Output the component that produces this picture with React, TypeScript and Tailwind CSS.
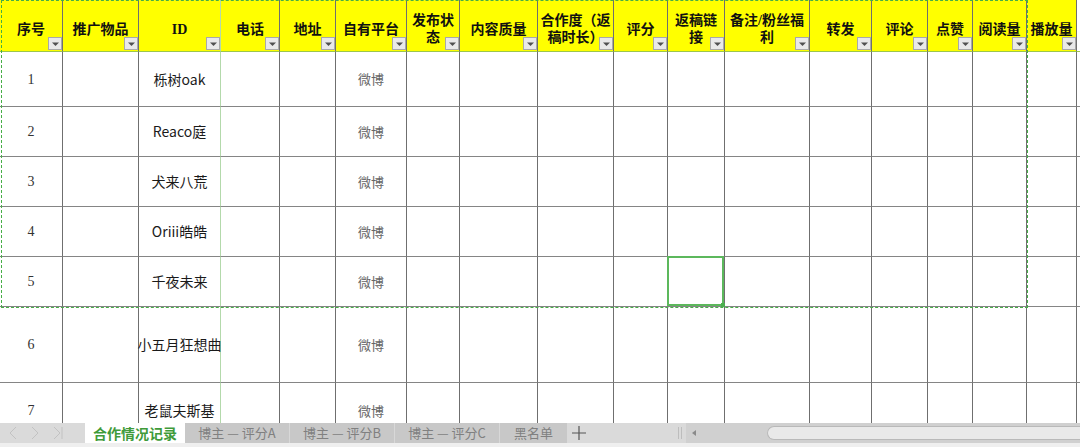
// 合作情况记录：表格视图，模拟电子表格的表头筛选、选区与底部工作表标签
const headers: string[][] = [
  ['序号'],
  ['推广物品'],
  ['ID'],
  ['电话'],
  ['地址'],
  ['自有平台'],
  ['发布状', '态'],
  ['内容质量'],
  ['合作度（返', '稿时长）'],
  ['评分'],
  ['返稿链', '接'],
  ['备注/粉丝福', '利'],
  ['转发'],
  ['评论'],
  ['点赞'],
  ['阅读量'],
  ['播放量'],
];

const rows = [
  { n: 1, id: '栎树oak' },
  { n: 2, id: 'Reaco庭' },
  { n: 3, id: '犬来八荒' },
  { n: 4, id: 'Oriii皓皓' },
  { n: 5, id: '千夜未来' },
  { n: 6, id: '小五月狂想曲' },
  { n: 7, id: '老鼠夫斯基' },
];

const tabs = ['博主 — 评分A', '博主 — 评分B', '博主 — 评分C'];

function FilterButton() {
  return (
    <div className="absolute right-0 bottom-[1px] w-[14px] h-[13px] bg-[#e9e9e9] border border-[#a9a9a9] flex items-center justify-center">
      <svg width="9" height="6" viewBox="0 0 9 6">
        <path d="M1 1.5 H8 L4.5 5 Z" fill="#505050" />
      </svg>
    </div>
  );
}

function cellBorder(col: number) {
  // 第三列右侧为浅绿色冻结线
  return col === 2 ? 'border-r border-r-[#b3d9ab]' : 'border-r border-r-[#6f6f6f]';
}

export default function App() {
  return (
    <div className="w-[1080px] h-[447px] flex flex-col overflow-hidden bg-white" style={{ fontFamily: '"Noto Sans CJK SC", "Noto Sans", sans-serif' }}>
      {/* Sheet */}
      <div className="relative h-[423px] overflow-hidden">
        <div className="grid grid-cols-[63px_76px_82px_59px_56px_71px_53px_78px_76px_54px_57px_85px_62px_56px_45px_54px_50px_3px] grid-rows-[52px_55px_50px_50px_50px_50px_76px_56px]">
          {/* Header */}
          {headers.map((h, i) => (
            <div
              key={i}
              className={`relative bg-[#ffff00] border-b border-b-[#9cc64c] ${cellBorder(i)} flex flex-col items-center justify-center pt-[7px] text-[14px] leading-[17px] font-bold text-[#111]`}
              style={{ fontFamily: '"Liberation Serif", "Noto Sans CJK SC", serif' }}
            >
              {h.map((line, j) => (
                <span key={j} className="whitespace-nowrap">{line}</span>
              ))}
              <FilterButton />
            </div>
          ))}
          <div className="border-b border-b-[#9cc64c]" />

          {/* Body */}
          {rows.map((r) => (
            <div key={r.n} className="contents">
              {headers.map((_, c) => (
                <div key={c} className={`relative border-b border-b-[#858585] ${cellBorder(c)} flex items-center justify-center`}>
                  {c === 0 && (
                    <span className="text-[14px] text-[#333]" style={{ fontFamily: '"Liberation Serif", serif' }}>{r.n}</span>
                  )}
                  {c === 2 && <span className="text-[14px] text-[#1a1a1a] whitespace-nowrap">{r.id}</span>}
                  {c === 5 && <span className="text-[13px] text-[#666]">微博</span>}
                  {c === 10 && r.n === 5 && (
                    <div className="absolute -left-px -top-px right-0 bottom-0 border-2 border-[#5cb85c]">
                      <div className="absolute -right-[3px] -bottom-[3px] w-[4px] h-[4px] bg-[#4caf50]" />
                    </div>
                  )}
                </div>
              ))}
              <div className="border-b border-b-[#858585]" />
            </div>
          ))}
        </div>

        {/* Copy marquee */}
        <div className="absolute left-[1px] top-0 w-[1027px] h-[308px] border border-dashed border-[#46ad46] pointer-events-none" />
      </div>

      {/* Sheet tabs */}
      <div className="h-[24px] flex flex-col bg-[#dadada]">
        <div className="h-[20px] flex items-stretch">
          <div className="w-[85px] flex items-center gap-[14px] pl-[9px] text-[#c2c2c2]">
            <svg width="8" height="14" viewBox="0 0 8 14"><path d="M7 1 L1 7 L7 13" fill="none" stroke="currentColor" strokeWidth="1" /></svg>
            <svg width="8" height="14" viewBox="0 0 8 14"><path d="M1 1 L7 7 L1 13" fill="none" stroke="currentColor" strokeWidth="1" /></svg>
            <svg width="10" height="14" viewBox="0 0 10 14"><path d="M1 1 L7 7 L1 13 M9 1 V13" fill="none" stroke="currentColor" strokeWidth="1" /></svg>
          </div>
          <div className="w-[100px] bg-white flex items-center justify-center text-[14px] font-bold text-[#3f9b3a]">合作情况记录</div>
          {tabs.map((t) => (
            <div key={t} className="w-[105px] bg-[#c8c8c8] border-r border-[#d8d8d8] flex items-center justify-center text-[13px] text-[#808080] whitespace-nowrap">
              {t}
            </div>
          ))}
          <div className="w-[67px] bg-[#c8c8c8] flex items-center justify-center text-[13px] text-[#808080]">黑名单</div>
          <div className="w-[24px] flex items-center justify-center text-[#555]">
            <svg width="14" height="14" viewBox="0 0 14 14"><path d="M7 0 V14 M0 7 H14" stroke="currentColor" strokeWidth="1.2" /></svg>
          </div>
          <div className="flex-1" />
          <div className="w-[10px] flex items-center justify-center gap-[2px]">
            <div className="w-px h-[12px] bg-[#bdbdbd]" />
            <div className="w-px h-[12px] bg-[#bdbdbd]" />
          </div>
          <div className="w-[81px] ml-[1px] bg-[#d0d0d0] flex items-center pl-[6px]">
            <svg width="4" height="6" viewBox="0 0 4 6"><path d="M4 0 L0 3 L4 6 Z" fill="#8a8a8a" /></svg>
          </div>
          <div className="w-[313px] flex items-center bg-[#d0d0d0]">
            <div className="w-full h-[14px] rounded-l-[7px] bg-[#e9e9e9] border border-r-0 border-[#b9b9b9]" />
          </div>
        </div>
        <div className="h-[4px] bg-[#efefef]" />
      </div>
    </div>
  );
}
